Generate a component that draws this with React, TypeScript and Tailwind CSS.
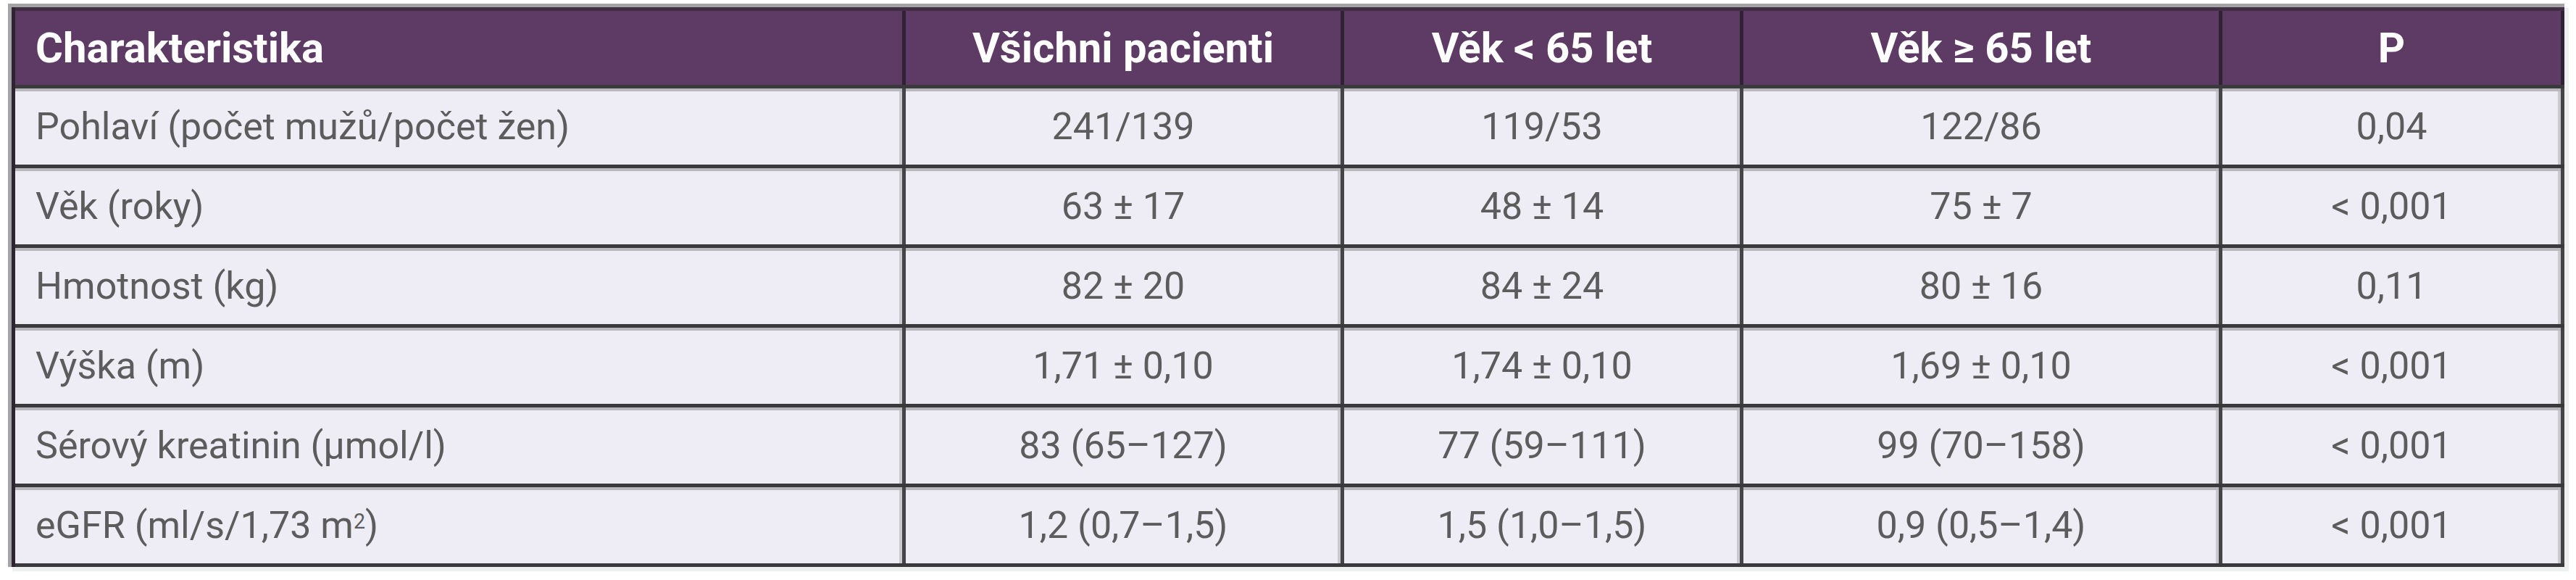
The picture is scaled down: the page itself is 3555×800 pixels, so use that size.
const columns = ['Charakteristika', 'Všichni pacienti', 'Věk < 65 let', 'Věk ≥ 65 let', 'P'];

const rows: { label: React.ReactNode; values: string[] }[] = [
  { label: 'Pohlaví (počet mužů/počet žen)', values: ['241/139', '119/53', '122/86', '0,04'] },
  { label: 'Věk (roky)', values: ['63 ± 17', '48 ± 14', '75 ± 7', '< 0,001'] },
  { label: 'Hmotnost (kg)', values: ['82 ± 20', '84 ± 24', '80 ± 16', '0,11'] },
  { label: 'Výška (m)', values: ['1,71 ± 0,10', '1,74 ± 0,10', '1,69 ± 0,10', '< 0,001'] },
  { label: 'Sérový kreatinin (μmol/l)', values: ['83 (65–127)', '77 (59–111)', '99 (70–158)', '< 0,001'] },
  {
    label: (
      <>
        eGFR (ml/s/1,73 m<sup className="text-[0.55em] relative -top-[0.2em]">2</sup>)
      </>
    ),
    values: ['1,2 (0,7–1,5)', '1,5 (1,0–1,5)', '0,9 (0,5–1,4)', '< 0,001'],
  },
];

const grid = 'grid grid-cols-[1229px_605px_551px_661px_472px]';

export default function App() {
  return (
    <div className="min-h-screen bg-white pt-[5px] pl-[11px] font-['Roboto',_'Liberation_Sans',_sans-serif]">
      <div className="w-[3528px] border-t-[5px] border-l-[5px] border-[#a4a4a6] shadow-[6px_6px_0_#eef0f0]">
        <div className="border-l-[5px] border-[#2f2432]">
          {/* header */}
          <div className={`${grid} h-[107px] border-t-[5px] border-[#3f2e44] bg-[#5e3b64]`}>
            {columns.map((c, i) => (
              <div
                key={c}
                className={`flex items-center border-r-[5px] border-[#2f2232] text-[58px] font-bold text-white leading-none ${
                  i === 0 ? 'justify-start pl-[28px]' : 'justify-center'
                }`}
              >
                {c}
              </div>
            ))}
          </div>

          {/* body */}
          {rows.map((r, ri) => (
            <div
              key={ri}
              className={`${grid} border-t-[5px] border-[#3a3a3c] bg-[#eeedf6] ${
                ri === rows.length - 1 ? 'h-[115px] border-b-[5px]' : 'h-[110px]'
              }`}
            >
              <div className="flex items-center border-r-[5px] border-[#454547] pl-[28px] text-[52px] leading-none text-[#5c5c5c] shadow-[inset_0_4px_0_#b7b7bc,inset_-4px_0_0_#c8c8ce]">
                {r.label}
              </div>
              {r.values.map((v, vi) => (
                <div
                  key={vi}
                  className="flex items-center justify-center border-r-[5px] border-[#454547] text-[52px] leading-none text-[#5c5c5c] shadow-[inset_0_4px_0_#b7b7bc,inset_-4px_0_0_#c8c8ce]"
                >
                  {v}
                </div>
              ))}
            </div>
          ))}
        </div>
      </div>
    </div>
  );
}
